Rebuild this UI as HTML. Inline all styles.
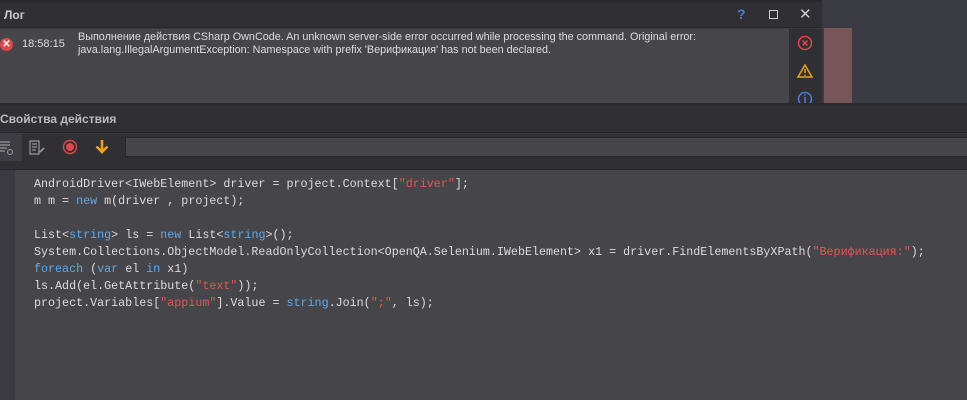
<!DOCTYPE html>
<html><head><meta charset="utf-8"><style>
*{margin:0;padding:0;box-sizing:border-box}
body{width:967px;height:400px;background:#3b3b44;position:relative;overflow:hidden;font-family:"Liberation Sans",sans-serif;color:#ddd}
.a{position:absolute}
.code{position:absolute;left:34px;top:176px;font-family:"Liberation Mono",monospace;font-size:11.7px;line-height:17px;color:#dcdcdc;white-space:pre}
.k{color:#5fa8e8}.s{color:#e0584f}
</style></head><body>
<div class="a" style="left:0;top:0;width:822px;height:2px;background:#2a2a2e"></div>
<div class="a" style="left:0;top:2px;width:822px;height:26px;background:#2f2f34;border-bottom:1px solid #28282c"></div>
<div class="a" style="left:4px;top:8px;font-size:12px;font-weight:bold;color:#ccc">Лог</div>
<div class="a" style="left:737px;top:6px;font-size:14px;font-weight:bold;color:#4a7fd8">?</div>
<div class="a" style="left:769px;top:10px;width:9px;height:9px;border:1.5px solid #ccc"></div>
<div class="a" style="left:799px;top:5px;font-size:15px;color:#ccc">✕</div>
<div class="a" style="left:0;top:29px;width:789px;height:74px;background:#46454a"></div>
<div class="a" style="left:789px;top:29px;width:33px;height:74px;background:#2f2f34"></div>
<div class="a" style="left:824px;top:28px;width:28px;height:75px;background:#77565a"></div>
<div class="a" style="left:0;top:38px;width:13px;height:13px;border-radius:50%;background:#e0474c;color:#fff;font-size:10px;line-height:13px;text-align:center;font-weight:bold">✕</div>
<div class="a" style="left:22px;top:38px;font-size:11px;color:#ddd">18:58:15</div>
<div class="a" style="left:78px;top:31px;font-size:10.8px;line-height:13px;color:#ddd">Выполнение действия CSharp OwnCode. An unknown server-side error occurred while processing the command. Original error:<br>java.lang.IllegalArgumentException: Namespace with prefix 'Верификация' has not been declared.</div>
<svg class="a" style="left:796px;top:34px" width="18" height="70">
<circle cx="9" cy="9" r="6.5" fill="none" stroke="#e0474c" stroke-width="1.5"/><path d="M6.5 6.5l5 5M11.5 6.5l-5 5" stroke="#e0474c" stroke-width="1.5"/>
<path d="M9 31l7 12H2z" fill="none" stroke="#e8a317" stroke-width="1.5"/><path d="M9 35v4M9 40.5v1.2" stroke="#e8a317" stroke-width="1.5"/>
<circle cx="9" cy="65" r="6.5" fill="none" stroke="#4a7fd8" stroke-width="1.5"/><path d="M9 63v6M9 60.5v1.2" stroke="#4a7fd8" stroke-width="1.5"/>
</svg>
<div class="a" style="left:0;top:103px;width:967px;height:2px;background:#2a2a2e"></div>
<div class="a" style="left:0;top:105px;width:967px;height:28px;background:#2f2f34;border-bottom:1px solid #28282c"></div>
<div class="a" style="left:0;top:112px;font-size:12px;font-weight:bold;color:#bbb">Свойства действия</div>
<div class="a" style="left:0;top:134px;width:967px;height:35px;background:#2f2f34"></div>
<div class="a" style="left:0;top:134px;width:22px;height:27px;background:#3e3d43"></div>
<svg class="a" style="left:0;top:138px" width="120" height="20">
<path d="M0 4h10M0 7h10M0 10h7M0 13h5" stroke="#999" stroke-width="1.2"/><circle cx="10" cy="14" r="2.5" fill="none" stroke="#999"/>
<path d="M30 3h9v13h-9zM32 6h5M32 9h5M32 12h4" fill="none" stroke="#999" stroke-width="1.2"/><path d="M40 14l4-4" stroke="#999" stroke-width="1.8"/>
<circle cx="70" cy="9" r="6.5" fill="none" stroke="#e0474c" stroke-width="1.4"/><circle cx="70" cy="9" r="4" fill="#e0474c"/>
<path d="M102 2v12M96.5 8.5l5.5 5.5 5.5-5.5" fill="none" stroke="#f0a020" stroke-width="2.6"/>
</svg>
<div class="a" style="left:125px;top:137px;width:842px;height:20px;background:#46454a;border:1px solid #28282c;border-right:none"></div>
<div class="a" style="left:0;top:169px;width:967px;height:1px;background:#28282c"></div>
<div class="a" style="left:0;top:170px;width:15px;height:230px;background:#3a3a40"></div>
<div class="a" style="left:15px;top:170px;width:952px;height:230px;background:#46454a"></div>
<div class="code">AndroidDriver&lt;IWebElement&gt; driver = project.Context[<span class="s">"driver"</span>];
m m = <span class="k">new</span> m(driver , project);

List&lt;<span class="k">string</span>&gt; ls = <span class="k">new</span> List&lt;<span class="k">string</span>&gt;();
System.Collections.ObjectModel.ReadOnlyCollection&lt;OpenQA.Selenium.IWebElement&gt; x1 = driver.FindElementsByXPath(<span class="s">"Верификация:"</span>);
<span class="k">foreach</span> (<span class="k">var</span> el <span class="k">in</span> x1)
ls.Add(el.GetAttribute(<span class="s">"text"</span>));
project.Variables[<span class="s">"appium"</span>].Value = <span class="k">string</span>.Join(<span class="s">";"</span>, ls);</div>
</body></html>
